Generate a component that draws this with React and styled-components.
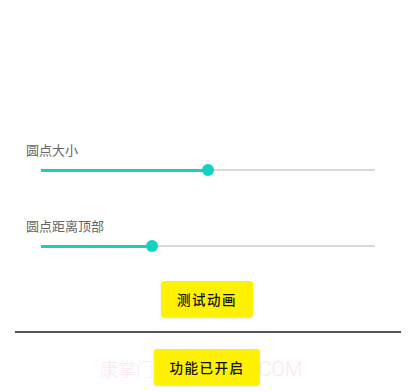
import React from 'react'
import styled, { createGlobalStyle } from 'styled-components'

const Global = createGlobalStyle`
body {
  margin: 0;
  background: #fff;
  font-family: Roboto, "Noto Sans CJK SC", sans-serif;
}
`

const Screen = styled.div`
position: relative;
width: 411px;
height: 392px;
overflow: hidden;
background: #fff;
padding-top: 143px;
box-sizing: border-box;
`

const Label = styled.div`
margin-left: 26px;
font-size: 13px;
line-height: 16px;
color: #666;
`

const SliderRow = styled.div`
position: relative;
height: 20px;
margin: 1px 36px 0 41px;
display: flex;
align-items: center;
margin-bottom: ${props => props.gap}px;
`

const Track = styled.div`
position: relative;
flex: 1;
height: 2px;
background: #d9d9d9;
`

const Fill = styled.div`
height: 3px;
margin-top: -0.5px;
background: #22ccbd;
`

const Thumb = styled.div`
position: absolute;
top: 50%;
width: 12px;
height: 12px;
margin: -6px 0 0 -6px;
border-radius: 50%;
background: #14d2c3;
`

const ButtonRow = styled.div`
display: flex;
justify-content: center;
`

const Button = styled.button`
position: relative;
z-index: 1;
height: 36px;
width: ${props => props.w}px;
margin-left: ${props => props.shift}px;
border: none;
border-radius: 3px;
background: #fff200;
box-shadow: 0 1px 2px rgba(0, 0, 0, 0.18);
font-family: Roboto, "Noto Sans CJK SC", sans-serif;
font-size: 13.5px;
font-weight: 500;
letter-spacing: 1.5px;
color: #111;
padding: 0;
`

const Divider = styled.div`
height: 1.5px;
background: #555;
margin: 14px 10px 16px 15px;
`

const Watermark = styled.div`
position: absolute;
z-index: 0;
left: 100px;
top: 357px;
display: flex;
align-items: baseline;
font-family: Roboto, "Noto Sans CJK SC", sans-serif;
font-weight: 300;
line-height: 24px;
color: #fce6f5;
white-space: nowrap;
pointer-events: none;
`

const MarkCn = styled.span`
font-size: 18px;
`

const MarkEn = styled.span`
font-size: 20px;
margin-left: 6px;
`

function Slider({ value, gap }) {
  const pct = value * 100 + '%'
  return (
    <SliderRow gap={gap}>
      <Track>
        <Fill style={{ width: pct }} />
        <Thumb style={{ left: pct }} />
      </Track>
    </SliderRow>
  )
}

export default function App() {
  return (
    <Screen>
      <Global />
      <Label>圆点大小</Label>
      <Slider value={0.5} gap={39} />
      <Label>圆点距离顶部</Label>
      <Slider value={0.333} gap={25} />
      <ButtonRow>
        <Button w={92} shift={3}>测试动画</Button>
      </ButtonRow>
      <Divider />
      <ButtonRow>
        <Button w={106} shift={3}>功能已开启</Button>
      </ButtonRow>
      <Watermark>
        <MarkCn>康掌门</MarkCn>
        <MarkEn>• KANGZM.COM</MarkEn>
      </Watermark>
    </Screen>
  )
}
